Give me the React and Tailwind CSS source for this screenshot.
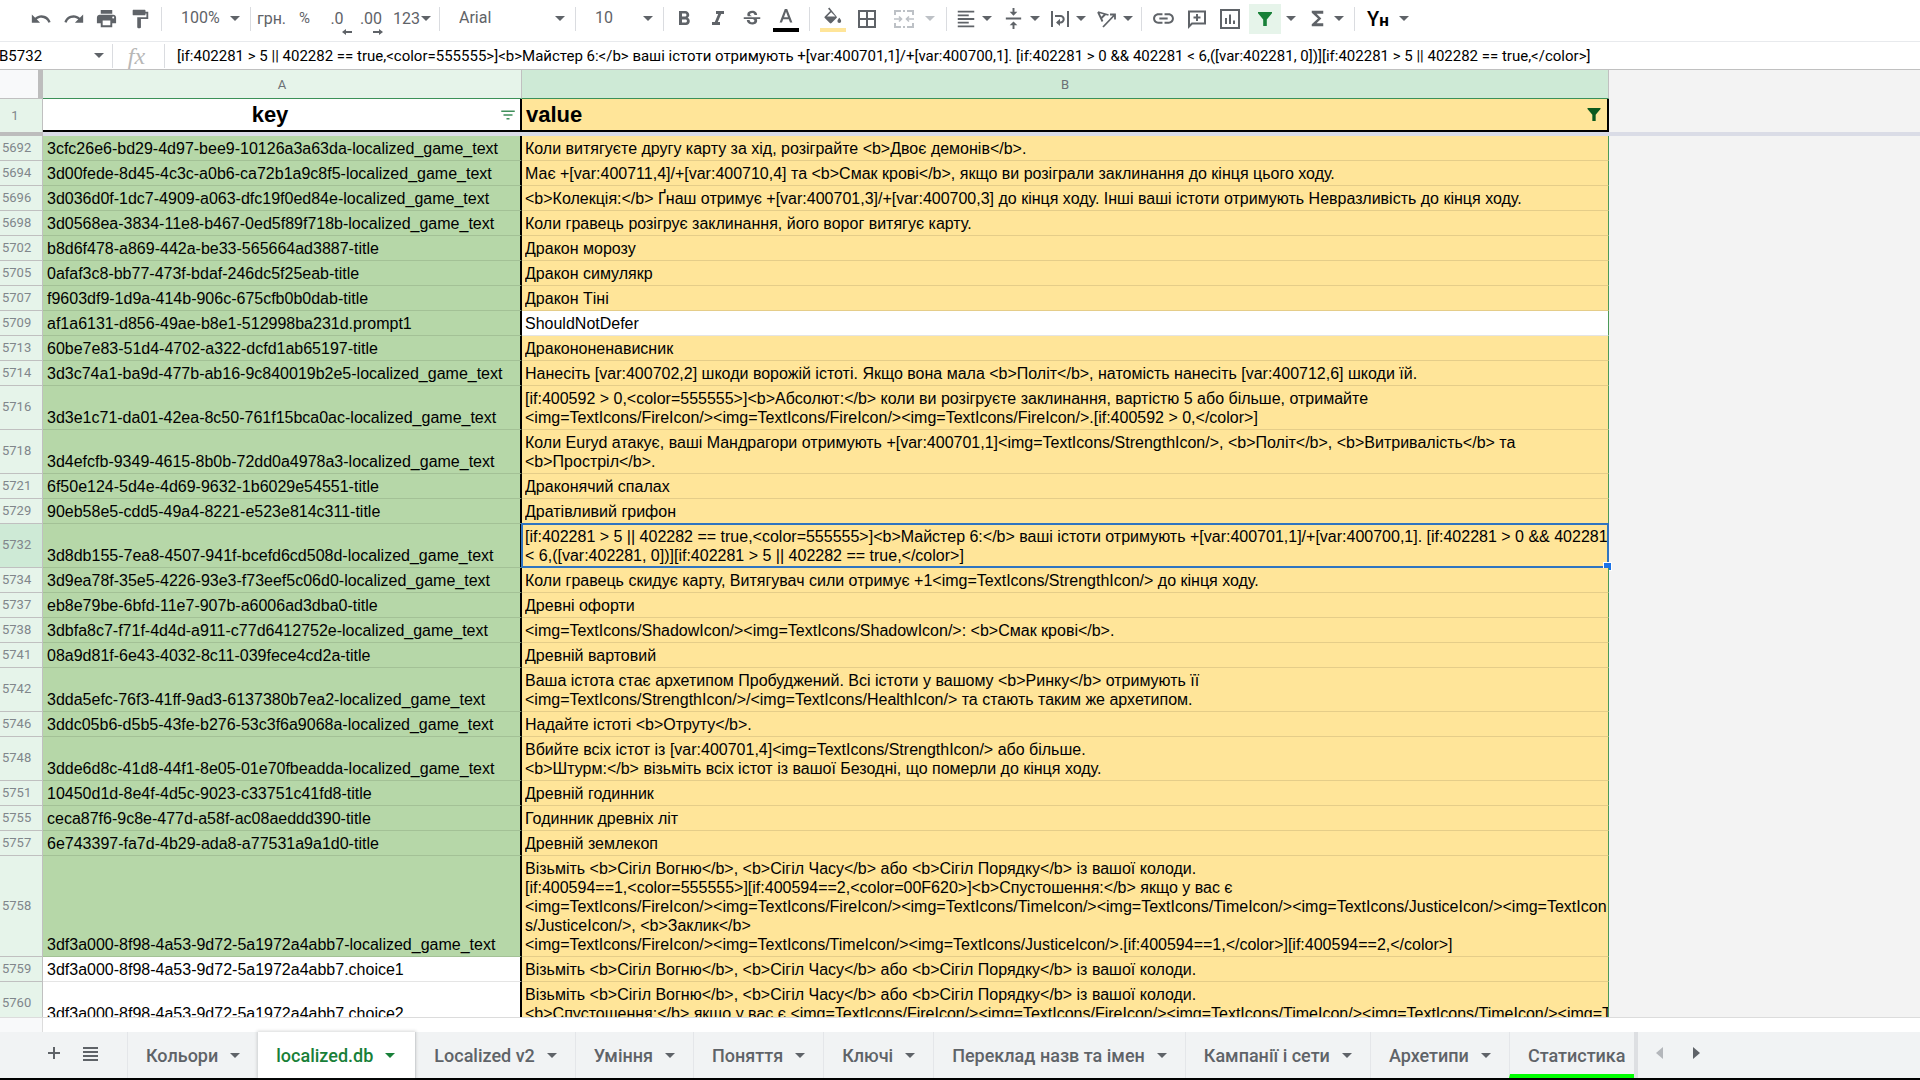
import React from "react";
import {
  MdUndo,
  MdRedo,
  MdPrint,
  MdFormatPaint,
  MdFormatBold,
  MdFormatItalic,
  MdStrikethroughS,
  MdBorderAll,
  MdFormatAlignLeft,
  MdVerticalAlignCenter,
  MdInsertLink,
  MdFunctions,
  MdFilterList,
} from "react-icons/md";

const FORMULA =
  "[if:402281 > 5 || 402282 == true,<color=555555>]<b>Майстер 6:</b> ваші істоти отримують +[var:400701,1]/+[var:400700,1]. [if:402281 > 0 && 402281 < 6,([var:402281, 0])][if:402281 > 5 || 402282 == true,</color>]";

const ROWS = [
  ["5692", "3cfc26e6-bd29-4d97-bee9-10126a3a63da-localized_game_text", "Коли витягуєте другу карту за хід, розіграйте <b>Двоє демонів</b>."],
  ["5694", "3d00fede-8d45-4c3c-a0b6-ca72b1a9c8f5-localized_game_text", "Має +[var:400711,4]/+[var:400710,4] та <b>Смак крові</b>, якщо ви розіграли заклинання до кінця цього ходу."],
  ["5696", "3d036d0f-1dc7-4909-a063-dfc19f0ed84e-localized_game_text", "<b>Колекція:</b> Ґнаш отримує +[var:400701,3]/+[var:400700,3] до кінця ходу. Інші ваші істоти отримують Невразливість до кінця ходу."],
  ["5698", "3d0568ea-3834-11e8-b467-0ed5f89f718b-localized_game_text", "Коли гравець розігрує заклинання, його ворог витягує карту."],
  ["5702", "b8d6f478-a869-442a-be33-565664ad3887-title", "Дракон морозу"],
  ["5705", "0afaf3c8-bb77-473f-bdaf-246dc5f25eab-title", "Дракон симулякр"],
  ["5707", "f9603df9-1d9a-414b-906c-675cfb0b0dab-title", "Дракон Тіні"],
  ["5709", "af1a6131-d856-49ae-b8e1-512998ba231d.prompt1", "ShouldNotDefer"],
  ["5713", "60be7e83-51d4-4702-a322-dcfd1ab65197-title", "Дракононенависник"],
  ["5714", "3d3c74a1-ba9d-477b-ab16-9c840019b2e5-localized_game_text", "Нанесіть [var:400702,2] шкоди ворожій істоті. Якщо вона мала <b>Політ</b>, натомість нанесіть [var:400712,6] шкоди їй."],
  ["5716", "3d3e1c71-da01-42ea-8c50-761f15bca0ac-localized_game_text", "[if:400592 > 0,<color=555555>]<b>Абсолют:</b> коли ви розігруєте заклинання, вартістю 5 або більше, отримайте\n<img=TextIcons/FireIcon/><img=TextIcons/FireIcon/><img=TextIcons/FireIcon/>.[if:400592 > 0,</color>]"],
  ["5718", "3d4efcfb-9349-4615-8b0b-72dd0a4978a3-localized_game_text", "Коли Euryd атакує, ваші Мандрагори отримують +[var:400701,1]<img=TextIcons/StrengthIcon/>, <b>Політ</b>, <b>Витривалість</b> та\n<b>Простріл</b>."],
  ["5721", "6f50e124-5d4e-4d69-9632-1b6029e54551-title", "Драконячий спалах"],
  ["5729", "90eb58e5-cdd5-49a4-8221-e523e814c311-title", "Дратівливий грифон"],
  ["5732", "3d8db155-7ea8-4507-941f-bcefd6cd508d-localized_game_text", "[if:402281 > 5 || 402282 == true,<color=555555>]<b>Майстер 6:</b> ваші істоти отримують +[var:400701,1]/+[var:400700,1]. [if:402281 > 0 && 402281\n< 6,([var:402281, 0])][if:402281 > 5 || 402282 == true,</color>]"],
  ["5734", "3d9ea78f-35e5-4226-93e3-f73eef5c06d0-localized_game_text", "Коли гравець скидує карту, Витягувач сили отримує +1<img=TextIcons/StrengthIcon/> до кінця ходу."],
  ["5737", "eb8e79be-6bfd-11e7-907b-a6006ad3dba0-title", "Древні офорти"],
  ["5738", "3dbfa8c7-f71f-4d4d-a911-c77d6412752e-localized_game_text", "<img=TextIcons/ShadowIcon/><img=TextIcons/ShadowIcon/>: <b>Смак крові</b>."],
  ["5741", "08a9d81f-6e43-4032-8c11-039fece4cd2a-title", "Древній вартовий"],
  ["5742", "3dda5efc-76f3-41ff-9ad3-6137380b7ea2-localized_game_text", "Ваша істота стає архетипом Пробуджений. Всі істоти у вашому <b>Ринку</b> отримують її\n<img=TextIcons/StrengthIcon/>/<img=TextIcons/HealthIcon/> та стають таким же архетипом."],
  ["5746", "3ddc05b6-d5b5-43fe-b276-53c3f6a9068a-localized_game_text", "Надайте істоті <b>Отруту</b>."],
  ["5748", "3dde6d8c-41d8-44f1-8e05-01e70fbeadda-localized_game_text", "Вбийте всіх істот із [var:400701,4]<img=TextIcons/StrengthIcon/> або більше.\n<b>Штурм:</b> візьміть всіх істот із вашої Безодні, що померли до кінця ходу."],
  ["5751", "10450d1d-8e4f-4d5c-9023-c33751c41fd8-title", "Древній годинник"],
  ["5755", "ceca87f6-9c8e-477d-a58f-ac08aeddd390-title", "Годинник древніх літ"],
  ["5757", "6e743397-fa7d-4b29-ada8-a77531a9a1d0-title", "Древній землекоп"],
  ["5758", "3df3a000-8f98-4a53-9d72-5a1972a4abb7-localized_game_text", "Візьміть <b>Сігіл Вогню</b>, <b>Сігіл Часу</b> або <b>Сігіл Порядку</b> із вашої колоди.\n[if:400594==1,<color=555555>][if:400594==2,<color=00F620>]<b>Спустошення:</b> якщо у вас є\n<img=TextIcons/FireIcon/><img=TextIcons/FireIcon/><img=TextIcons/TimeIcon/><img=TextIcons/TimeIcon/><img=TextIcons/JusticeIcon/><img=TextIcon\ns/JusticeIcon/>, <b>Заклик</b>\n<img=TextIcons/FireIcon/><img=TextIcons/TimeIcon/><img=TextIcons/JusticeIcon/>.[if:400594==1,</color>][if:400594==2,</color>]"],
  ["5759", "3df3a000-8f98-4a53-9d72-5a1972a4abb7.choice1", "Візьміть <b>Сігіл Вогню</b>, <b>Сігіл Часу</b> або <b>Сігіл Порядку</b> із вашої колоди."],
  ["5760", "3df3a000-8f98-4a53-9d72-5a1972a4abb7.choice2", "Візьміть <b>Сігіл Вогню</b>, <b>Сігіл Часу</b> або <b>Сігіл Порядку</b> із вашої колоди.\n<b>Спустошення:</b> якщо у вас є <img=TextIcons/FireIcon/><img=TextIcons/FireIcon/><img=TextIcons/TimeIcon/><img=TextIcons/TimeIcon/><img=TextIcons/JusticeIcon/>"],
];

const PLAIN_KEYS = ["5759", "5760"];
const PLAIN_VALUES = ["5709"];
const SELECTED = "5732";

const TABS = [
  { name: "Кольори" },
  { name: "localized.db", active: true },
  { name: "Localized v2" },
  { name: "Уміння" },
  { name: "Поняття" },
  { name: "Ключі" },
  { name: "Переклад назв та імен" },
  { name: "Кампанії і сети" },
  { name: "Архетипи" },
];

function Caret({ className = "" }) {
  return (
    <svg viewBox="0 0 10 5" className={`h-[5px] w-[10px] shrink-0 fill-current ${className}`} aria-hidden="true">
      <path d="M0 0h10L5 5z" />
    </svg>
  );
}

function Divider({ className = "" }) {
  return <span className={`h-6 w-px shrink-0 bg-[#dadce0] ${className}`} />;
}

function Tool({ label, className = "w-[33px]", children }) {
  return (
    <button type="button" aria-label={label} className={`flex h-[30px] shrink-0 items-center justify-center ${className}`}>
      {children}
    </button>
  );
}

function MenuTool({ label, className = "", children }) {
  return (
    <button type="button" aria-label={label} className={`flex h-[30px] w-[47px] shrink-0 items-center gap-[5px] pl-2 ${className}`}>
      {children}
      <Caret />
    </button>
  );
}

function ToolSelect({ label, value, className }) {
  return (
    <div className={`relative flex shrink-0 items-center ${className}`}>
      <select aria-label={label} defaultValue={value} className="h-[30px] w-full appearance-none bg-transparent pb-[2px] pl-[19px] text-[16px] outline-none">
        <option>{value}</option>
      </select>
      <Caret className="pointer-events-none absolute right-[10px]" />
    </div>
  );
}

function Funnel({ className }) {
  return (
    <svg viewBox="0 0 14 14" className={`fill-current ${className}`} aria-hidden="true">
      <path d="M0 0h14v1.2L8.8 7.4V14H5.2V7.4L0 1.2z" />
    </svg>
  );
}

function Toolbar() {
  return (
    <div role="toolbar" aria-label="Панель інструментів" className="flex h-[41px] shrink-0 items-center pb-[4px] pl-[24px] text-[16px] text-[#5f6368]">
      <Tool label="Скасувати"><MdUndo size={22} /></Tool>
      <Tool label="Повторити"><MdRedo size={22} /></Tool>
      <Tool label="Друк"><MdPrint size={23} /></Tool>
      <Tool label="Копіювати формат"><MdFormatPaint size={22} /></Tool>
      <Divider className="ml-[5px]" />
      <ToolSelect label="Масштаб" value="100%" className="w-[88px]" />
      <Divider />
      <Tool label="Грошовий формат" className="w-[41px]">грн.</Tool>
      <Tool label="Відсотковий формат" className="w-[25px] text-[15px]">%</Tool>
      <Tool label="Менше десяткових знаків" className="w-10">
        <span className="relative">
          .0
          <svg viewBox="0 0 10 6" className="absolute -right-2 -bottom-1 h-[6px] w-[10px] fill-current" aria-hidden="true">
            <path d="M0 3l4-3v2h6v2H4v2z" />
          </svg>
        </span>
      </Tool>
      <Tool label="Більше десяткових знаків" className="w-7">
        <span className="relative">
          .00
          <svg viewBox="0 0 10 6" className="absolute -right-px -bottom-1 h-[6px] w-[10px] fill-current" aria-hidden="true">
            <path d="M10 3L6 0v2H0v2h6v2z" />
          </svg>
        </span>
      </Tool>
      <Tool label="Інші формати" className="w-[54px] gap-px">123<Caret className="w-[9px]" /></Tool>
      <Divider />
      <ToolSelect label="Шрифт" value="Arial" className="w-[135px]" />
      <Divider />
      <ToolSelect label="Розмір шрифту" value="10" className="w-[87px]" />
      <Divider />
      <Tool label="Жирний" className="ml-[3px] w-[34px]"><MdFormatBold size={24} /></Tool>
      <Tool label="Курсив" className="w-[34px]"><MdFormatItalic size={24} /></Tool>
      <Tool label="Закреслений" className="w-[34px]"><MdStrikethroughS size={22} /></Tool>
      <Tool label="Колір тексту" className="w-[34px]">
        <svg viewBox="0 0 26 26" className="h-[26px] w-[26px]" aria-hidden="true">
          <path d="M11.8 3h2.4l5.2 13.5h-2.4l-1.2-3.3h-5.6L9 16.500H6.600zM11 11.200h4L13 5.700z" fill="#5f6368" />
          <path d="M0 22h26v4H0z" fill="#000" />
        </svg>
      </Tool>
      <Divider className="mx-[6px]" />
      <Tool label="Колір заливки" className="w-[34px]">
        <svg viewBox="0 0 26 26" className="h-[26px] w-[26px]" aria-hidden="true">
          <path d="M9.300 1.500L8 2.800l2.200 2.200-5.400 5.400c-.5.500-.5 1.200 0 1.700l5 5c.5.500 1.200.500 1.700 0l5-5c.5-.5.5-1.200 0-1.700zM11.200 6.300l4.300 4.200H7zM19.300 11.800s-1.900 2.100-1.900 3.300a1.900 1.900 0 0 0 3.800 0c0-1.200-1.900-3.300-1.900-3.300z" fill="#5f6368" />
          <path d="M0 22h26v4H0z" fill="#ffe599" />
        </svg>
      </Tool>
      <Tool label="Межі" className="w-[34px]"><MdBorderAll size={24} /></Tool>
      <button type="button" aria-label="Об’єднати клітинки" className="flex h-[30px] w-[62px] shrink-0 items-center gap-[10px] pl-[9px] text-[#bdc1c6]">
        <svg viewBox="0 0 22 20" className="h-5 w-[22px]" fill="none" stroke="currentColor" strokeWidth="2" aria-hidden="true">
          <path d="M2 6V2h6M14 2h6v4M2 14v4h6M14 18h6v-4M10 2h2M10 18h2" />
          <path d="M1 10h7M21 10h-7M6 7.500L8.500 10 6 12.500M16 7.500L13.500 10l2.500 2.500" strokeWidth="1.600" />
        </svg>
        <Caret />
      </button>
      <Divider />
      <MenuTool label="Горизонтальне вирівнювання"><MdFormatAlignLeft size={22} /></MenuTool>
      <MenuTool label="Вертикальне вирівнювання"><MdVerticalAlignCenter size={23} /></MenuTool>
      <MenuTool label="Перенесення тексту">
        <svg viewBox="0 0 22 22" className="h-[22px] w-[22px]" fill="none" stroke="currentColor" strokeWidth="2" aria-hidden="true">
          <path d="M3 3v16M19 3v16M6 8h5.500a3.200 3.200 0 0 1 0 6.400H8.500" />
          <path d="M11 10.800l-4 3.600 4 3.600z" fill="currentColor" stroke="none" />
        </svg>
      </MenuTool>
      <MenuTool label="Поворот тексту">
        <svg viewBox="0 0 22 22" className="h-[22px] w-[22px]" fill="none" stroke="currentColor" strokeWidth="1.800" aria-hidden="true">
          <path d="M2 4l10.500 3M2 4l4.500 9.500M9.500 6L5 10.500M7 19L18.500 7M14 6.500h5v5" />
        </svg>
      </MenuTool>
      <Divider className="ml-[6px]" />
      <Tool label="Вставити посилання" className="ml-[5px] w-[33px]"><MdInsertLink size={25} /></Tool>
      <Tool label="Вставити коментар">
        <svg viewBox="0 0 20 20" className="h-5 w-5" fill="none" stroke="currentColor" strokeWidth="2" aria-hidden="true">
          <path d="M18 2.500v12H5L2 17.500v-15zM10 5v7M6.500 8.500h7" />
        </svg>
      </Tool>
      <Tool label="Вставити діаграму">
        <svg viewBox="0 0 20 20" className="h-5 w-5" fill="none" stroke="currentColor" strokeWidth="2" aria-hidden="true">
          <path d="M1 1h18v18H1zM6 9v6M10 5.500V15M14 11.500V15" />
        </svg>
      </Tool>
      <Tool label="Фільтр" className="ml-[3px] w-8 bg-[#e6f4ea] text-[#188038]"><Funnel className="h-[14px] w-[14px]" /></Tool>
      <Tool label="Режими фільтрування" className="w-5"><Caret /></Tool>
      <MenuTool label="Функції" className="pl-[5px]"><MdFunctions size={23} /></MenuTool>
      <Divider className="ml-[6px]" />
      <button type="button" aria-label="Спосіб введення" className="flex h-[30px] shrink-0 items-center gap-[10px] pl-3">
        <span className="flex items-baseline font-medium text-black"><span className="text-[20px]">Ү</span><span className="text-[17px] font-bold">н</span></span>
        <Caret />
      </button>
    </div>
  );
}

function FormulaBar() {
  return (
    <div className="flex h-[29px] shrink-0 items-center border-y border-t-[#e8eaed] border-b-[#c0c0c0] text-black">
      <div className="flex w-[112px] shrink-0 items-center overflow-hidden">
        <input aria-label="Поле імені" defaultValue="B5732" className="-ml-px h-6 w-[95px] bg-transparent text-[15px] outline-none" />
        <Caret className="text-[#5f6368]" />
      </div>
      <Divider />
      <span className="w-[51px] pr-1 text-center font-['Liberation_Serif'] text-[24px] leading-6 text-[#b7b7b7] italic">fx</span>
      <Divider />
      <input aria-label="Рядок формул" defaultValue={FORMULA} className="h-6 min-w-0 flex-1 bg-transparent pl-3 text-[15px] outline-none" />
    </div>
  );
}

function Row({ number, name, value }) {
  const selected = number === SELECTED;
  const keyColor = PLAIN_KEYS.includes(number) ? "bg-white" : "bg-[#b6d7a8]";
  const valueColor = PLAIN_VALUES.includes(number) ? "bg-white" : "bg-[#ffe599]";
  return (
    <tr>
      <th scope="row" className={`border-r border-b border-[#c0c0c0] pb-px pl-[2px] text-left align-middle font-['Roboto'] text-[13px] leading-5 font-normal text-[#80868b] ${selected ? "bg-[#ceead6]" : "bg-[#e6f4ea]"}`}>
        {number}
      </th>
      <td className={`border-r-2 border-b border-r-black border-b-black/10 pt-[3px] pb-[2px] pl-1 align-bottom whitespace-pre ${keyColor}`}>{name}</td>
      <td className={`relative border-r border-b border-r-[#4c9a57] border-b-black/10 pt-[3px] pb-[2px] pl-[3px] align-top ${valueColor}`}>
        <div className="overflow-hidden whitespace-pre">{value}</div>
        {selected && (
          <span className="pointer-events-none absolute -inset-x-px -top-px -bottom-px border-2 border-[#2f74c0]">
            <span className="absolute -right-[5px] -bottom-[5px] h-[9px] w-[9px] border border-white bg-[#1a73e8]" />
          </span>
        )}
      </td>
      <td className="bg-[#f3f3f3]" />
    </tr>
  );
}

function Sheet() {
  return (
    <div className="min-h-0 flex-1 overflow-hidden border-b border-[#dcdcdc] bg-[#f3f3f3]">
      <table className="w-full table-fixed border-separate border-spacing-0 font-['Liberation_Sans'] text-[16px] leading-[19px] text-black">
        <colgroup>
          <col className="w-[43px]" />
          <col className="w-[479px]" />
          <col className="w-[1087px]" />
          <col />
        </colgroup>
        <thead className="font-['Roboto']">
          <tr className="h-[29px] text-[13px] text-[#6b7075]">
            <td className="border-r-[5px] border-b border-r-[#bdbdbd] border-b-[#c0c0c0] bg-[#f8f9fa]" />
            <th scope="col" className="border-r border-b border-r-[#c0c0c0] border-b-[#3c9158] bg-[#e6f4ea] font-normal">A</th>
            <th scope="col" className="border-r border-b border-r-[#c0c0c0] border-b-[#3c9158] bg-[#ceead6] font-normal">B</th>
            <td />
          </tr>
          <tr className="h-[33px] font-['Liberation_Sans'] text-[22px] leading-7 font-bold">
            <th scope="row" className="border-r border-[#c0c0c0] bg-[#e6f4ea] pr-3 font-['Roboto'] text-[13px] font-normal text-[#80868b]">1</th>
            <td className="border-r-2 border-b-2 border-black bg-white">
              <div className="flex items-center pr-[3px]">
                <span className="flex-1 pr-[2px] text-center">key</span>
                <button type="button" aria-label="Фільтр key" className="text-[#3f8f5b]"><MdFilterList size={18} /></button>
              </div>
            </td>
            <td className="border-r-2 border-b-2 border-black bg-[#ffe599]">
              <div className="flex items-center justify-between pr-[6px] pl-1">
                <span>value</span>
                <button type="button" aria-label="Фільтр value" className="text-[#0b5a1e]"><Funnel className="h-[13px] w-[14px]" /></button>
              </div>
            </td>
            <td />
          </tr>
          <tr className="h-1">
            <td className="bg-[#bdbdbd]" />
            <td colSpan={3} className="bg-[#dadce6]" />
          </tr>
        </thead>
        <tbody>
          {ROWS.map(([number, name, value]) => (
            <Row key={number} number={number} name={name} value={value} />
          ))}
        </tbody>
      </table>
    </div>
  );
}

function SheetTabs() {
  return (
    <div className="flex h-12 shrink-0 items-stretch border-b-2 border-black bg-[#f1f3f4] text-[18px] font-medium text-[#5f6368]">
      <div className="flex w-[127px] shrink-0 items-center gap-5 pb-[4px] pl-[45px]">
        <button type="button" aria-label="Додати аркуш" className="flex">
          <svg viewBox="0 0 18 18" className="h-[18px] w-[18px]" fill="none" stroke="currentColor" strokeWidth="2" aria-hidden="true"><path d="M9 3v12M3 9h12" /></svg>
        </button>
        <button type="button" aria-label="Усі аркуші" className="flex">
          <svg viewBox="0 0 15 15" className="h-[15px] w-[15px]" fill="none" stroke="currentColor" strokeWidth="2" aria-hidden="true"><path d="M0 2h15M0 6h15M0 10h15M0 14h15" /></svg>
        </button>
      </div>
      <nav aria-label="Аркуші" className="flex min-w-0">
        {TABS.map((tab) => (
          <button
            key={tab.name}
            type="button"
            className={`flex shrink-0 items-center gap-3 pl-[18px] ${tab.active ? "z-10 bg-white pr-5 text-[#188038] shadow-[0_0_3px_1px_rgba(60,64,67,0.2)]" : "border-l border-[#e4e6e9] pr-[18px]"}`}
          >
            {tab.name}
            <Caret className="h-[5px] w-[9px]" />
          </button>
        ))}
        <button type="button" className="flex w-[125px] items-center overflow-hidden border-b-4 border-l border-b-[#00ff00] border-l-[#e4e6e9] pt-1 pl-[18px] whitespace-nowrap">
          Статистика
        </button>
      </nav>
      <div className="flex items-center gap-[30px] border-l-4 border-[#dddfe2] pb-[4px] pl-[18px]">
        <button type="button" aria-label="Прокрутити ліворуч" className="flex text-[#b4b7bb]">
          <svg viewBox="0 0 7 12" className="h-3 w-[7px] fill-current" aria-hidden="true"><path d="M7 0v12L0 6z" /></svg>
        </button>
        <button type="button" aria-label="Прокрутити праворуч" className="flex">
          <svg viewBox="0 0 7 12" className="h-3 w-[7px] fill-current" aria-hidden="true"><path d="M0 0v12l7-6z" /></svg>
        </button>
      </div>
    </div>
  );
}

export default function App() {
  return (
    <main className="flex h-screen flex-col overflow-hidden bg-white font-['Roboto']">
      <Toolbar />
      <FormulaBar />
      <Sheet />
      <div className="h-[14px] shrink-0 bg-white"><div className="h-full w-[43px] border-r border-[#dcdcdc] bg-[#f8f9fa]" /></div>
      <SheetTabs />
    </main>
  );
}
